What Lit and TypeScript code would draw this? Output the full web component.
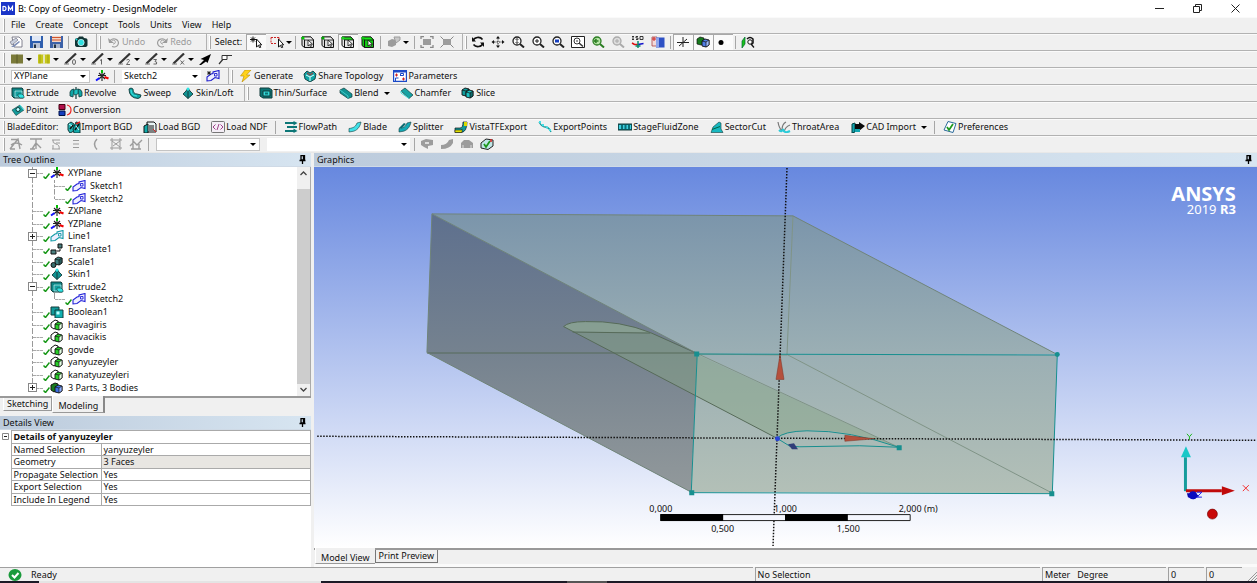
import { LitElement, html, svg, css, nothing, TemplateResult } from "lit";
import { customElement, property } from "lit/decorators.js";

const T = "#10a5a5";
const D = "#123c3c";

const cube = (face: string, side: string, x = 0, y = 0) => svg`
  <path d="M${x + 1} ${y + 3}l3-2 4 1v5l-3 2-4-1z" fill=${face} stroke="#111" stroke-width=".9"/>
  <path d="M${x + 5} ${y + 4}l3-2v5l-3 2z" fill=${side} stroke="#111" stroke-width=".7"/>
  <path d="M${x + 1} ${y + 3}l4 1" stroke="#111" stroke-width=".7"/>`;

const magnifier = (color: string, inner: TemplateResult | typeof nothing, lens = "#fff") => svg`
  <circle cx="6" cy="5" r="4" fill=${lens} stroke=${color} stroke-width="1.3"/>
  <path d="M9 8l4 3.500" stroke=${color} stroke-width="2"/>${inner}`;

const pickCube = (body: string, top: string, dot: string) => svg`
  <path d="M1 2V9.500L3.500 11.500H12.500V4L10 1H1z" fill=${body} stroke="#111"/>
  <path d="M1 1h9l2.500 3H3.500z" fill=${top} stroke="#111" stroke-width=".8"/>
  <path d="M3.500 4v7.500" stroke="#111"/>
  <circle cx="2" cy="2" r="1.600" fill=${dot}/>
  <path d="M7 4v6l1.500-1.300 1 2 1-.5-1-2h2z" fill="#fff" stroke="#111" stroke-width=".8"/>`;

const lineTool = (mark: TemplateResult) => svg`
  <path d="M1.500 10.500L12 .500" stroke="#333" stroke-width="2.200"/>
  <path d="M0 11h5" stroke="#777"/>
  <g fill="none" stroke="#555" stroke-width=".9">${mark}</g>`;

const sketch = (color: string) => svg`
  <path d="M1 11V7L5 4l2-.5V2l6-1.500v8L9 7.500 5 10.500z" fill="#eef" stroke=${color} stroke-width="1.100"/>
  <path d="M8.500 3.500h2.500v2.500H8.500z" fill="none" stroke=${color} stroke-width=".9"/>`;

const axes = svg`
  <path d="M7 1v10M3 5.500h8M4 9L10 3M4 3l6 6" stroke="#222" stroke-width="1.100"/>
  <path d="M9.500 7l4 1.500" stroke="#e00" stroke-width="2"/>
  <path d="M7 0v3" stroke="#0b0" stroke-width="2"/>
  <path d="M1 10.500L4.500 8" stroke="#11f" stroke-width="2"/>`;

const bladeShape = (fill: string) => svg`
  <path d="M1 11V7.500C6 7 8 5 9 2l4-1C12 6 9 10 4 10.500z" fill=${fill} stroke=${D} stroke-width=".6"/>`;

const G = "#9c9c9c";

const icons: Record<string, TemplateResult> = {
  newDoc: svg`<path d="M3 1h7l3 3v7H5z" fill="#fff" stroke="#667" stroke-width=".8"/><path d="M1 6l6-4 2 2-6 5z" fill="#c9cfdd" stroke="#667" stroke-width=".6"/><path d="M2 11l8-6 1 1-6 5z" fill="#7d8db5"/>`,
  save: svg`<path d="M1 0h13v12H1z" fill="#2f5fae"/><path d="M3 0h9v5H3z" fill="#dfe7f5"/><path d="M4 7h7v5H4z" fill="#b8c2d6"/><path d="M5 8.500h2V12H5z" fill="#234"/>`,
  saveAs: svg`<path d="M1 0h13v12H1z" fill="#3d62a8"/><path d="M3 0h9v6H3z" fill="#f3d6c6"/><path d="M3 1.500h9M3 4h9" stroke="#d2562e"/><path d="M4 8h7v4H4z" fill="#a8b4cc"/><path d="M5 8.500h2V12H5z" fill="#234"/>`,
  camera: svg`<path d="M1 4q0-2 3-2l1-1.500h4L10 2q3.500 0 3.500 2v5q0 2-3 2H4Q1 11 1 9z" fill="#133"/><circle cx="7" cy="6.500" r="3.200" fill="#2fe0e0" stroke="#fff" stroke-width=".6"/><circle cx="2.500" cy="3.500" r="1" fill="#2dd"/>`,
  undo: svg`<path d="M3 5a4.500 4 0 1 1 2 5.500" fill="none" stroke=${G} stroke-width="1.200"/><path d="M1 2l1 5h5z" fill=${G}/><path d="M5 4.500a2 2 0 1 1 1 3.500" fill="none" stroke=${G}/>`,
  redo: svg`<path d="M11 5a4.500 4 0 1 0-2 5.500" fill="none" stroke=${G} stroke-width="1.200"/><path d="M13 2l-1 5H7z" fill=${G}/><path d="M9 4.500a2 2 0 1 0-1 3.500" fill="none" stroke=${G}/>`,
  pointer: svg`<path d="M1 3.500h6M2 1.500l4 4M6 1.500l-4 4M4 .500v6" stroke="#111"/><path d="M7.500 3v8l2-1.700 1 2.500 1.200-.5-1-2.500h2z" fill="#fff" stroke="#111"/>`,
  boxSel: svg`<path d="M1 1.500h8M1 1.500v6h5M9 1.500v2" fill="none" stroke="#c22" stroke-dasharray="2 1"/><path d="M8.500 3v8l2-1.700 1 2.500 1.200-.5-1-2.500h2z" fill="#fff" stroke="#111"/>`,
  fPoint: pickCube("#ddd", "#eee", "#0c0"),
  fEdge: pickCube("#ddd", "#eee", "#0a0"),
  fFace: pickCube("#e8e8e8", "#1fd41f", "#1fd41f"),
  fBody: pickCube("#12c812", "#18e818", "#12c812"),
  extendSel: svg`<path d="M1 5l4-2 4 1v5l-4 2-4-1z" fill=${G}/><path d="M7 1h6v3L9 7z" fill="#c8c8c8" stroke=${G}/>`,
  grow: svg`<path d="M3 3h8v6H3z" fill=${G}/><path d="M1 3V.500h3M10 .500h3V3M13 9v2.500h-3M4 11.500H1V9" fill="none" stroke="#888" stroke-width="1.300"/>`,
  shrink: svg`<path d="M3 3h8v6H3z" fill=${G}/><path d="M.500 .500l3 3M13.500 .500l-3 3M.500 11.500l3-3M13.500 11.500l-3-3" stroke="#888"/>`,
  rotate: svg`<path d="M2 5C3 1 9 0 11.500 3.500" fill="none" stroke="#111" stroke-width="1.600"/><path d="M12 7C11 11 5 12 2.500 8.500" fill="none" stroke="#111" stroke-width="1.600"/><path d="M1 1v4.500h4zM13 11V6.500H9z" fill="#111"/>`,
  pan: svg`<path d="M7 2v8M3 6h8" stroke="#222" stroke-dasharray="1.500 1"/><path d="M7 0l2 2.500H5zM7 12L5 9.500h4zM.500 6L3 4v4zM13.500 6L11 4v4z" fill="#111"/>`,
  zoom: magnifier("#222", svg`<path d="M6 2.500v5M4.500 4L6 2.500 7.500 4M4.500 6L6 7.500 7.500 6" fill="none" stroke="#222" stroke-width=".8"/>`),
  zoomIn: magnifier("#222", svg`<path d="M6 3v4M4 5h4" stroke="#222"/>`),
  zoomBox: magnifier("#222", svg`<path d="M4 3.500h4v3H4z" fill="#1740c0"/>`),
  zoomFit: svg`<path d="M.500 .500h13v11H.500z" fill="#fff" stroke="#222"/><circle cx="6" cy="5" r="3" fill="none" stroke="#333"/><path d="M8 7l4 3.500" stroke="#333" stroke-width="1.500"/><path d="M5 5h2" stroke="#333"/>`,
  zoomPrev: magnifier("#2b7d22", svg`<path d="M3.500 5h4M5.500 3L3.500 5l2 2" fill="none" stroke="#2b7d22" stroke-width="1.300"/>`, "#b9e6a8"),
  zoomNext: magnifier("#aaa", svg`<path d="M4 5h4M6 3v4" stroke="#aaa"/>`, "#ddd"),
  iso: svg`<path d="M1 .500h2M2 .500v3M1 3.500h2M7 .500H5v1.500h2v1.500H5M9 .500h3v3H9z" fill="none" stroke="#222" stroke-width=".9"/><path d="M1 7l2.500 1.500H7" fill="none" stroke="#d11" stroke-width="1.500"/><path d="M7 8.500l5.500-1" stroke="#11c" stroke-width="1.500"/><path d="M7 5v7M4.500 10h5" stroke="#0a8a6a" stroke-width="1.500"/>`,
  lookAt: svg`<path d="M1 1h5v9H1z" fill="#f3dada" stroke="#a44" stroke-width=".8"/><path d="M5 1.500h8.500v10H5z" fill="#2d50c4"/><path d="M5 1.500h3v10H5z" fill="#8fa5ea"/><path d="M3 1v4M1 3h4" stroke="#c22"/>`,
  origin: svg`<path d="M7 1v10M1 6.500h12M3 10l8-7" stroke="#222"/>`,
  solids: svg`<path d="M1 3l3-2 4 1v5L5 9 1 8z" fill="#167a1d" stroke="#111" stroke-width=".7"/>${cube("#4f7fe6", "#9fbcff", 5, 2)}`,
  dot: svg`<circle cx="5" cy="6.500" r="2.500" fill="#000"/><circle cx="12" cy="6.500" r="2" fill="#fff"/>`,
  lookFace: svg`<path d="M1 5l3-4v7l-3 4z" fill="#19c219" stroke="#063" stroke-width=".7"/><path d="M6 3q3-3 6 0v4q-1 2-2 0" fill="none" stroke="#111" stroke-width="1.500"/><circle cx="9" cy="6" r="2.200" fill="#fff" stroke="#111"/><path d="M10 8l3 3.500" stroke="#111" stroke-width="1.200"/>`,
  olive: svg`<path d="M1 1.500h12v9H1z" fill="#7b7b3a"/><path d="M7 1.500v9" stroke="#5a5a28"/>`,
  yellow: svg`<path d="M1 1.500h12v9H1z" fill="#c6c61a"/><path d="M7 1.500v9" stroke="#eee" stroke-width="1.500"/><path d="M3 1.500v9M11 1.500v9" stroke="#a2a210"/>`,
  line0: lineTool(svg`<ellipse cx="10" cy="9" rx="1.500" ry="2.500"/>`),
  line1: lineTool(svg`<path d="M9 7.500l1.500-1v5"/>`),
  line2: lineTool(svg`<path d="M8.500 7q3-1.500 3 .5l-3 4h3.500"/>`),
  line3: lineTool(svg`<path d="M8.500 6.500h3L10 8.500q2.500 0 1.500 2.500H8.500"/>`),
  lineX: lineTool(svg`<path d="M8.500 7.500l3.500 4M12 7.500l-3.500 4"/>`),
  arrowBlack: svg`<path d="M1 12l5-5-3.500-1L13 1 9.500 10 8 8.500 3 12z" fill="#000"/>`,
  node: svg`<path d="M1 11l5-6M7 2.500h7" stroke="#333" stroke-width="1.200"/><path d="M4 2.500h5v4H4z" fill="#fff" stroke="#333"/>`,
  axes,
  newSketch: svg`${sketch("#1a1acc")}<path d="M1 3h4M3 1v4M1.500 1.500l3 3M4.500 1.500l-3 3" stroke="#111" stroke-width=".8"/>`,
  bolt: svg`<path d="M6 0L1.500 6H5L3 12l8-7H7.500L12 0z" fill="#ffd21a" stroke="#b98a00" stroke-width=".6"/>`,
  share: svg`<path d="M1 4l3-3 3 2 3-2 3 3-1 5-5 3-5-3z" fill=${T} stroke=${D} stroke-width=".9"/><path d="M3 5l4 2 4-2M7 7v4" stroke="#e6ffff" stroke-width="1" fill="none"/><path d="M4 3l3 2 3-2" stroke="#c22" fill="none"/>`,
  params: svg`<path d="M.500 .500h13v11H.500z" fill="#fff" stroke="#1a49c8" stroke-width="1.400"/><path d="M.500 1.500h13" stroke="#1a49c8" stroke-width="2"/><path d="M2 5h3M3.500 3.500v3M9 9h3M10.500 7.500v3" stroke="#c22"/><path d="M7.500 6V3.500h3v2h-3M2.500 11V8h3" fill="none" stroke="#1a49c8"/>`,
  extrude: svg`<path d="M1 1h10l1 1v9H3L1 9z" fill="#0d8686" stroke=${D}/><path d="M4 4h7v6H4z" fill="#14a0a0" stroke="#dff" stroke-width=".6"/><path d="M7 7h4l2 2v2H9L7 9z" fill="#2fe3e3" stroke=${D} stroke-width=".6"/>`,
  revolve: svg`<path d="M1 9V5q1-3 4-3v4q-1 1-1 4zM13 9V5q-1-3-4-3v4q1 1 1 4z" fill=${T} stroke=${D} stroke-width=".8"/><path d="M7 0v12" stroke=${D} stroke-width="1.200"/><path d="M5 3l4-1v5L5 8z" fill="#1fc3c3" stroke=${D} stroke-width=".6"/>`,
  sweep: svg`<path d="M1 2q2-2 4 0 0 5 4 5l4 1q0 3-3 3.500Q1 11 1 2z" fill=${T} stroke=${D} stroke-width=".9"/><path d="M3 3q0 6 6 6" stroke="#4ee" fill="none"/>`,
  skin: svg`<path d="M7 1l2 3 3 3-5 4.500L2 7l3-3z" fill="#129393" stroke=${D} stroke-width=".9"/><path d="M7 4v7.500" stroke=${D}/><circle cx="7" cy="2" r="1.500" fill="#2fe3e3"/>`,
  thin: svg`<path d="M1 1h9l3 2v8H4L1 9z" fill="#0b7474" stroke=${D}/><path d="M4 4h7v5H4z" fill="#35dada" stroke=${D}/><path d="M6 5.500h3v2H6z" fill="#0b7474"/>`,
  blend: svg`<path d="M1 3l4-2 8 6v3l-4 1.500L1 6z" fill="#119494" stroke=${D} stroke-width=".7"/><path d="M1 3l8 6v2.500" fill="none" stroke="#4cc"/>`,
  chamfer: svg`<path d="M1 4l4-3 8 7-4 3.500z" fill="#16a3a3" stroke=${D} stroke-width=".7"/><path d="M1 4v2l8 5.500" fill="none" stroke="#4dd"/>`,
  slice: svg`${cube("#119b9b", "#0b6b6b", 0, 0)}${cube("#1bc4c4", "#0b6b6b", 4, 2)}`,
  point: svg`<path d="M1 6l8-5 4 5-8 5.500z" fill="#149c9c" stroke=${D} stroke-width=".6"/><circle cx="7" cy="5.500" r="2" fill="#bff" stroke=${D}/><path d="M9 1l4 5" stroke="#6ee"/>`,
  convert: svg`<path d="M1 .500h6v5H1z" fill="#b0104a" stroke="#401"/><path d="M1 7h6v4.500H1z" fill="#173fc0" stroke="#014"/><path d="M9 1q4 1 4 5t-4 5" fill="none" stroke="#e22" stroke-width="1.200"/>`,
  importBgd: svg`<path d="M1 3l3-2 3 2v7l-4 2-2-3z" fill="#22b5b5" stroke=${D}/><path d="M9 1l4 1v10H7L6 8z" fill="#1aa" stroke=${D}/><path d="M3 8l3-4M8 9l4-6" stroke="#111" stroke-width="1.500"/><path d="M2 3l3 2M9 5l3 4" stroke="#cff"/><path d="M9 3l4-2" stroke="#d22" stroke-width="1.500"/>`,
  loadBgd: svg`<path d="M4 1h7l2 2v8H4z" fill="#e8f4f4" stroke="#111"/><path d="M1 5l4-2v9H1z" fill="#1aa" stroke="#111"/><path d="M6 5h5M6 7h5M6 9h5" stroke="#111"/><path d="M10 8l3 3" stroke="#d22"/>`,
  loadNdf: svg`<rect x=".500" y=".500" width="13" height="11" rx="1" fill="#f4eef6" stroke="#777"/><path d="M4.500 3.500L2 6l2.500 2.500M9.500 3.500L12 6 9.500 8.500M8 3L6 9" fill="none" stroke="#a0428a"/>`,
  flow: svg`<path d="M1 2h10M3 6h10M1 10h10" stroke="#0d7777" stroke-width="2.200"/><path d="M9.500 0l4 2-4 2.500zM9.500 7.500l4 2.500-4 2z" fill="#0d7777"/>`,
  blade: bladeShape("#3fe0e8"),
  splitter: svg`${bladeShape("#13a9b5")}<path d="M1 7l5-5 2 1-4 4z" fill="#0b6a72"/>`,
  vista: svg`<path d="M1 7h5q3 0 3-6h4q0 10-6 10.500H1z" fill="#0d9a9a" stroke="#111" stroke-width=".7"/><path d="M1 9h6l1-1v3.500H1z" fill="#e0e000" stroke="#222" stroke-width=".6"/><path d="M10 1h3v4h-3z" fill="#dada00"/>`,
  exportPts: svg`<path d="M1 1q3 5 6 5 4 0 6 5" fill="none" stroke="#159a9a" stroke-width="1.300"/><path d="M1 1h2M4 4h2M8 6.500h2M11 9h2" stroke="#3fe0e8" stroke-width="2"/>`,
  stage: svg`<path d="M0 3h14v6H0z" fill="#0b6f78" stroke=${D}/><path d="M1 4h2v4H1zM5 4h1.500v4H5zM8.500 4H10v4H8.500zM12 4h1v4h-1z" fill="#3fd0e0"/>`,
  sector: svg`<path d="M1 11.500L3 6l6-5 2 1v6l2 3.500z" fill="#17b8c0" stroke=${D} stroke-width=".6"/><path d="M2 8.500l8-3" stroke="#064"/>`,
  throat: svg`<path d="M1 1q1 6 4 9M5 9q0-6 4-8M7 11q1-5 6-7" fill="none" stroke="#777" stroke-width="1.200"/><path d="M2 9q3 3 4-1 1 5 7 2" fill="none" stroke="#2ccbd8" stroke-width="2"/>`,
  cad: svg`<path d="M1 3l3-1v9l-3 1z" fill="#12a5b0" stroke="#044"/><path d="M4 3h4V1l6 4-6 5V8H4z" fill="#0b0b0b"/><path d="M4 8h5v3H4z" fill="#12a5b0"/>`,
  prefs: svg`<path d="M5 .500l8 2L10 11.500 1 9z" fill="#fff" stroke="#2a6a9a"/><path d="M4 6l2 3 4-6" fill="none" stroke="#1c9a1c" stroke-width="1.800"/>`,
  g1: svg`<path d="M1 11L9 1l2 10M2 7q5-4 11 0M2 1.500h6M1 11h5" fill="none" stroke=${G} stroke-width="1.400"/>`,
  g2: svg`<path d="M1 1h12M7 1v10M7 5l-4 6M7 5l5 5M1 11h5" fill="none" stroke=${G} stroke-width="1.400"/>`,
  g3: svg`<path d="M3 2h8M4 2q-1 3 3 4t3 5M11 5H7M3 11h8M4 7v4" fill="none" stroke=${G}/>`,
  g4: svg`<path d="M4 2.500h6M4 6h6M4 9.500h6" stroke=${G} stroke-width="1.200"/>`,
  g5: svg`<path d="M8 1Q3 6 8 11.500" fill="none" stroke=${G} stroke-width="1.500"/>`,
  g6: svg`<path d="M1 2h12M1 10h12M3 0v12M11 0v12M3 3l8 6M4 8l7-5" stroke=${G} fill="none"/>`,
  g7: svg`<path d="M1 8l4-4 3 3 5-5M2 11h10M4 1v10M10 6v5" stroke=${G} stroke-width="1.400" fill="none"/>`,
  b1: svg`<path d="M1 3l5-2 7 1v5l-5 1v3l-4-2-3-2z" fill=${G}/><path d="M5 4h4v2H5z" fill="#ddd"/>`,
  b2: svg`<path d="M1 11V7q6 0 8-5l4-1v4Q10 11 1 11z" fill=${G}/>`,
  b3: svg`<path d="M1 5l3-3h5l4 3v5H1z" fill=${G}/><path d="M3 10v-3M11 10v-3" stroke="#ddd"/>`,
  b4: svg`<path d="M1 5l5-4 7 1v6l-5 3.500L1 10z" fill="#bfe6e8" stroke="#222"/><path d="M4 6l2 3 4-6" fill="none" stroke="#1b961b" stroke-width="1.800"/><path d="M11 1v3" stroke="#d22" stroke-width="1.500"/>`,
  sketchBlue: sketch("#2222d8"),
  sketchTeal: sketch("#0f9aa5"),
  translate: svg`<path d="M1 7h5v4H1zM8 1h4v4H8z" fill="#4a8080" stroke="#111"/><path d="M7 8h3V6" fill="none" stroke="#111"/>`,
  scale: svg`${cube("#3f8080", "#2a5c5c", 4, 0)}<circle cx="3.500" cy="9" r="2.500" fill="#356b6b" stroke="#111"/>`,
  boolean: svg`<path d="M1 1h8v8H1z" fill="#119a9a" stroke=${D}/><path d="M5 4h8v8H5z" fill="#0fb0b0" stroke=${D}/><path d="M6.500 5.500h3v3h-3z" fill="#bff"/>`,
  named: svg`<path d="M1 4l4-3 3 1v6l-4 2-3-2z" fill="#fff" stroke="#111"/>${cube("#28cf28", "#e6ffe6", 4, 2)}`,
  bodies: svg`<path d="M1 3l4-2 3 1v6l-4 2-3-2z" fill="#167a1d" stroke="#111"/>${cube("#3d6fe0", "#8fb0ff", 4, 2)}`,
};

const icon = (name: string) => html`<svg class="ic" viewBox="0 0 14 12" aria-hidden="true">${icons[name]}</svg>`;
const down = html`<svg class="down" viewBox="0 0 6 3" aria-hidden="true"><path d="M0 0h6L3 3z" /></svg>`;
const pin = html`<svg class="pin" viewBox="0 0 7 9" aria-hidden="true"><path d="M2 .500h3.500V5H2zM4.500 .500V5M.500 5.500h6M3.500 6v3" fill="none" stroke="#000" stroke-width="1.300"/></svg>`;

const shared = css`
  * { box-sizing: border-box; }
  button, select, input { font: inherit; color: inherit; border: 0; margin: 0; padding: 0; background: none; white-space: nowrap; }
  .ic { width: 14px; height: 12px; flex: none; display: block; }
  .pin { width: 7px; height: 9px; margin-right: 5px; }
  .head {
    height: 14px; display: flex; align-items: center; justify-content: space-between;
    padding-left: 3px; background: linear-gradient(90deg, #bccbdc, #d7e5f1); border-bottom: 1px solid #cfdae6;
  }
`;

type Item = [kind: string, icon?: string, label?: string];

const BARS: Item[][] = [
  [["t", "", "File"], ["t", "", "Create"], ["t", "", "Concept"], ["t", "", "Tools"], ["t", "", "Units"], ["t", "", "View"], ["t", "", "Help"]],
  [
    ["i", "newDoc", "New"], ["i", "save", "Save"], ["i", "saveAs", "Save as"], ["sep"], ["i", "camera", "Capture"], ["brk"],
    ["off", "undo", "Undo"], ["off", "redo", "Redo"], ["gap"], ["gap"], ["brk"], ["gap"], ["l", "", "Select:"], ["gap"], ["on", "pointer", "New selection"],
    ["d", "boxSel", "Selection mode"], ["sep"], ["i", "fPoint", "Points"], ["i", "fEdge", "Edges"], ["on", "fFace", "Faces"], ["i", "fBody", "Bodies"],
    ["sep"], ["d", "extendSel", "Extend"], ["gap"], ["sep"], ["i", "grow", "Expand"], ["i", "shrink", "Shrink"], ["brk"],
    ["i", "rotate", "Rotate"], ["i", "pan", "Pan"], ["i", "zoom", "Zoom"], ["i", "zoomIn", "Zoom in"], ["i", "zoomBox", "Box zoom"],
    ["i", "zoomFit", "Fit"], ["i", "zoomPrev", "Previous view"], ["i", "zoomNext", "Next view"], ["i", "iso", "Isometric"], ["i", "lookAt", "Look at"],
    ["sep"], ["on", "origin", "Plane"], ["on", "solids", "Model"], ["on", "dot", "Points"], ["sep"], ["i", "lookFace", "Look at face"],
  ],
  [
    ["d", "olive", "Face colour"], ["d", "yellow", "Edge colour"], ["d", "line0", "Free edges"], ["d", "line1", "Single edges"],
    ["d", "line2", "Double edges"], ["d", "line3", "Triple edges"], ["d", "lineX", "Multiple edges"], ["i", "arrowBlack", "Direction"], ["i", "node", "Vertices"],
  ],
  [
    ["plane", "", "XYPlane"], ["i", "axes", "New plane"], ["sep"], ["sketch", "", "Sketch2"], ["i", "newSketch", "New sketch"], ["brk"],
    ["t", "bolt", "Generate"], ["t", "share", "Share Topology"], ["t", "params", "Parameters"],
  ],
  [
    ["t", "extrude", "Extrude"], ["t", "revolve", "Revolve"], ["gap"], ["t", "sweep", "Sweep"], ["t", "skin", "Skin/Loft"], ["brk"],
    ["gap"], ["gap"], ["t", "thin", "Thin/Surface"], ["gap"], ["td", "blend", "Blend"], ["t", "chamfer", "Chamfer"], ["t", "slice", "Slice"],
  ],
  [["t", "point", "Point"], ["t", "convert", "Conversion"]],
  [
    ["l", "", "BladeEditor:"], ["tw", "importBgd", "Import BGD"], ["tw", "loadBgd", "Load BGD"], ["tw", "loadNdf", "Load NDF"], ["sep"],
    ["tw", "flow", "FlowPath"], ["tw", "blade", "Blade"], ["tw", "splitter", "Splitter"], ["tw", "vista", "VistaTFExport"], ["tw", "exportPts", "ExportPoints"],
    ["tw", "stage", "StageFluidZone"], ["tw", "sector", "SectorCut"], ["tw", "throat", "ThroatArea"], ["gap"], ["td", "cad", "CAD Import"], ["sep"], ["tw", "prefs", "Preferences"],
  ],
  [
    ["i", "g1", "Blade tool 1"], ["i", "g2", "Blade tool 2"], ["i", "g3", "Blade tool 3"], ["i", "g4", "Blade tool 4"], ["i", "g5", "Blade tool 5"],
    ["i", "g6", "Blade tool 6"], ["i", "g7", "Blade tool 7"], ["sep"], ["mid", "", ""], ["wide", "", ""], ["sep"],
    ["i", "b1", "Body tool 1"], ["i", "b2", "Body tool 2"], ["i", "b3", "Body tool 3"], ["i", "b4", "Body tool 4"],
  ],
];

@customElement("dm-toolbars")
class DmToolbars extends LitElement {
  static styles = [shared, css`
    :host { display: block; background: #f0f0f0; }
    .bar { height: 17px; display: flex; align-items: center; border-bottom: 1px solid #b2b2b2; box-shadow: inset 0 1px #fafafa; overflow: hidden; }
    .bar:last-child { border-bottom-color: #e8e8e8; }
    .handle { width: 2px; height: 13px; margin: 0 1px 0 3px; border-right: 1px solid #a6a6a6; border-left: 1px solid #fff; flex: none; }
    .brk { display: flex; flex: none; margin-left: 5px; }
    .brk::before { content: ""; width: 1px; height: 17px; background: #b2b2b2; }
    .brk .handle { height: 13px; margin: 2px 1px 0 2px; }
    .sep { width: 1px; height: 13px; margin: 0 2px; background: #a6a6a6; flex: none; }
    .gap { width: 2px; flex: none; }
    .t { display: flex; align-items: center; gap: 1px; padding: 0 5px; height: 16px; flex: none; }
    .tw { padding-left: 6px; }
    .t .down { margin-left: 4px; }
    .off { color: #9a9a9a; }
    .l { padding: 0 2px 0 1px; flex: none; }
    .i { width: 20px; height: 16px; display: grid; place-items: center; flex: none; }
    .on { background: #fafafa; box-shadow: inset 1px 1px #a8a8a8; }
    .d { width: 27px; height: 16px; display: flex; align-items: center; gap: 2px; padding-left: 4px; flex: none; }
    .down { width: 6px; height: 3px; flex: none; display: block; }
    .combo { position: relative; display: flex; align-items: center; flex: none; height: 13px; background: #fff; margin: 0 2px 0 5px; }
    .combo select { appearance: none; width: 100%; height: 13px; padding-left: 2px; }
    .combo .down { position: absolute; right: 3px; top: 5px; pointer-events: none; }
    .plane { width: 79px; border: 1px solid #c4c4c4; }
    .plane .down, .mid .down { top: 4px; }
    .sketch { width: 79px; }
    .mid { width: 104px; border: 1px solid #c4c4c4; }
    .wide { width: 143px; }
  `];

  private item([kind, name = "", label = ""]: Item) {
    switch (kind) {
      case "sep": return html`<span class="sep"></span>`;
      case "gap": return html`<span class="gap"></span>`;
      case "brk": return html`<span class="brk"><span class="handle"></span></span>`;
      case "l": return html`<span class="l">${label}</span>`;
      case "i": return html`<button class="i" aria-label=${label}>${icon(name)}</button>`;
      case "on": return html`<button class="i on" aria-pressed="true" aria-label=${label}>${icon(name)}</button>`;
      case "d": return html`<button class="d" aria-label=${label}>${icon(name)}${down}</button>`;
      case "off": return html`<button class="t off" disabled>${icon(name)}${label}</button>`;
      case "td": return html`<button class="t">${icon(name)}${label}${down}</button>`;
      case "tw": return html`<button class="t tw">${icon(name)}${label}</button>`;
      case "t": return html`<button class="t">${name ? icon(name) : nothing}${label}</button>`;
      default: return html`<label class="combo ${kind}"><select aria-label=${kind}><option>${label}</option></select>${down}</label>`;
    }
  }

  render() {
    return BARS.map((bar) => html`<div class="bar" role="toolbar"><span class="handle"></span>${bar.map((i) => this.item(i))}</div>`);
  }
}

type Node = [level: number, icon: string, label: string, box?: string];

const TREE: Node[] = [
  [0, "axes", "XYPlane", "-"], [1, "sketchBlue", "Sketch1"], [1, "sketchBlue", "Sketch2", "end"],
  [0, "axes", "ZXPlane"], [0, "axes", "YZPlane"], [0, "sketchTeal", "Line1", "+"], [0, "translate", "Translate1"],
  [0, "scale", "Scale1"], [0, "skin", "Skin1"], [0, "extrude", "Extrude2", "-"], [1, "sketchBlue", "Sketch2", "end"],
  [0, "boolean", "Boolean1"], [0, "named", "havagiris"], [0, "named", "havacikis"], [0, "named", "govde"],
  [0, "named", "yanyuzeyler"], [0, "named", "kanatyuzeyleri"], [0, "bodies", "3 Parts, 3 Bodies", "+"],
];

@customElement("dm-tree")
class DmTree extends LitElement {
  static styles = [shared, css`
    :host { flex: 1; min-height: 0; display: flex; flex-direction: column; }
    .body { flex: 1; min-height: 0; display: flex; background: #fff; border-right: 1px solid #aaa; }
    ul { list-style: none; margin: 0; padding: 0 0 2px; flex: 1; display: grid; grid-auto-rows: 1fr; }
    li { display: flex; align-items: center; padding-left: 27px; min-height: 0; }
    .cell { position: relative; width: 16px; align-self: stretch; flex: none; display: flex; align-items: center; }
    .cell::before { content: ""; position: absolute; left: 5px; top: 0; bottom: 0; border-left: 1px dashed #999; }
    .cell::after { content: ""; position: absolute; left: 6px; right: 0; top: 50%; border-top: 1px dashed #aaa; }
    .half::before { bottom: 50%; }
    .plain::after { display: none; }
    .gap { width: 6px; flex: none; }
    .box { position: relative; z-index: 1; width: 9px; height: 9px; margin-left: 1px; background: #fff; border: 1px solid #888; display: block; }
    .box path { stroke: #222; }
    .check { width: 7px; height: 6px; margin-top: 5px; flex: none; }
    .label { padding-left: 4px; line-height: 12px; }
    .bar { width: 13px; background: #f0f0f0; display: flex; flex-direction: column; align-items: center; padding: 4px 0; gap: 3px; }
    .bar svg { width: 7px; height: 5px; }
    .thumb { flex: 1; align-self: stretch; background: #cdcdcd; margin-top: 10px; }
  `];

  private row([level, name, label, box = ""]: Node, i: number) {
    const last = i === TREE.length - 1;
    return html`<li role="treeitem">
      ${level
        ? html`<span class="cell plain"></span><span class="gap"></span><span class="cell ${box === "end" ? "half" : ""}"></span>`
        : html`<span class="cell ${last ? "half" : ""}">${box
            ? html`<svg class="box" viewBox="0 0 7 7"><path d=${box === "+" ? "M1 3.500h5M3.500 1v5" : "M1 3.500h5"} /></svg>`
            : nothing}</span>`}
      <svg class="check" viewBox="0 0 7 6"><path d="M.500 3.500L2.500 5.500 6.500 .500" fill="none" stroke="#149614" stroke-width="1.500" /></svg>
      ${icon(name)}<span class="label">${label}</span>
    </li>`;
  }

  render() {
    return html`
      <div class="head">Tree Outline ${pin}</div>
      <div class="body">
        <ul role="tree">${TREE.map((n, i) => this.row(n, i))}</ul>
        <div class="bar">
          <svg viewBox="0 0 7 5"><path d="M.500 4l3-3 3 3" fill="none" stroke="#444" stroke-width="1.300" /></svg>
          <div class="thumb"></div>
          <svg viewBox="0 0 7 5"><path d="M.500 1l3 3 3-3" fill="none" stroke="#444" stroke-width="1.300" /></svg>
        </div>
      </div>`;
  }
}

const DETAILS: [string, string][] = [
  ["Named Selection", "yanyuzeyler"], ["Geometry", "3 Faces"], ["Propagate Selection", "Yes"], ["Export Selection", "Yes"], ["Include In Legend", "Yes"],
];

@customElement("dm-details")
class DmDetails extends LitElement {
  static styles = [shared, css`
    :host { display: flex; flex-direction: column; height: 151px; background: #fff; }
    table { width: 100%; height: 76px; border-collapse: collapse; table-layout: fixed; line-height: 11px; }
    th, td { padding: 0 2px; text-align: left; font-weight: 400; border: 1px solid #aaa; white-space: nowrap; }
    .gut { width: 11px; border: 0; padding: 0; }
    .gut svg { width: 7px; height: 7px; display: block; margin-left: 2px; }
    .name { width: 90px; }
    .title { font-weight: 700; }
    .ro { background: #e8e6e2; }
  `];

  render() {
    return html`
      <div class="head">Details View ${pin}</div>
      <table>
        <colgroup><col class="gut" /><col class="name" /><col /></colgroup>
        <tr>
          <td class="gut"><svg viewBox="0 0 7 7"><path d="M.500 .500h6v6h-6z" fill="#fff" stroke="#888" /><path d="M2 3.500h3" stroke="#222" /></svg></td>
          <th class="title" colspan="2">Details of yanyuzeyler</th>
        </tr>
        ${DETAILS.map(([k, v]) => html`<tr><td class="gut"></td><th>${k}</th><td class=${k === "Geometry" ? "ro" : ""}>${v}</td></tr>`)}
      </table>`;
  }
}

@customElement("dm-scene")
class DmScene extends LitElement {
  static styles = css`
    :host { display: block; flex: 1; min-height: 0; overflow: hidden; background: linear-gradient(#6788df, #fff); }
    svg { width: 100%; height: 100%; display: block; }
    text { font-family: "Noto Sans", sans-serif; font-size: 9px; fill: #111; }
    .brand { font-size: 20px; font-weight: 700; fill: #fff; text-anchor: end; }
    .release { font-size: 13px; fill: #fff; text-anchor: end; }
    .strong { font-weight: 700; }
    .edge { fill: none; stroke: #6f8478; stroke-width: 1; }
    .dark { fill: none; stroke: #566a58; stroke-width: 1; }
    .hidden { fill: none; stroke: #7f9487; stroke-width: 1; }
    .teal { fill: none; stroke: #178f8f; stroke-width: 1; }
    .dots { fill: none; stroke: #111; stroke-width: 1.5; stroke-dasharray: 1.5 1.5; }
    .knot { fill: #178f8f; }
  `;

  render() {
    return html`<svg viewBox="314 167 943 382" preserveAspectRatio="xMidYMid meet" role="img" aria-label="Model view">
      <defs>
        <linearGradient id="top" x1="0" y1="0" x2="0" y2="1"><stop offset="0" stop-color="#7b95ab" /><stop offset="1" stop-color="#9bafb4" /></linearGradient>
        <linearGradient id="side" x1="0" y1="0" x2="0" y2="1"><stop offset="0" stop-color="#5e708e" /><stop offset=".5" stop-color="#75828f" /><stop offset="1" stop-color="#92999b" /></linearGradient>
        <linearGradient id="front" x1="0" y1="0" x2="0" y2="1"><stop offset="0" stop-color="#9bafb4" /><stop offset="1" stop-color="#b3c0b7" /></linearGradient>
      </defs>
      <path d="M431 214L793 216 1058 355 697 354z" fill="url(#top)" />
      <path d="M431 214L697 354 691 493 426 353z" fill="url(#side)" />
      <path d="M697 354L1058 355 1053 494 691 493z" fill="url(#front)" />
      <path d="M563 327Q568 322 585 322Q620 321 650 333L697 355 899 448Q865 436 833 432 790 428 777 439z" fill="#86a582" fill-opacity=".45" />
      <path d="M563 327Q568 322 585 322Q620 321 650 333L572 332z" fill="#94ad9c" fill-opacity=".5" />
      <path class="dark" d="M426 353.500H697M563 327Q568 322 585 322Q620 321 650 333L697 354M563 327L777 439M572 332.500L650 333.500" />
      <path class="hidden" d="M697 354.500L787 355.500M793 216L787 355 1053 494M697 354L899 448" />
      <path class="edge" d="M697 354L431 214 793 216 1058 355M431 214L426 353 691 493" />
      <path class="teal" d="M697 354.500L1058 355.500 1053 494.500 691 493.500z" />
      <path class="dots" d="M787 168L773 547M316 437L1257 441" />
      <path class="teal" d="M777 439Q783 432 807 431.500 850 431 899 448L860 446.500 800 447.500 790 447z" />
      <path class="knot" d="M694 352h5v5h-5zM689 491h5v5h-5zM1050 492h5v5h-5zM897 446h5v5h-5z" />
      <circle class="knot" cx="1058" cy="355" r="2.500" />
      <path d="M780 355L784 380H776z" fill="#b5503c" stroke="#7c3022" stroke-width=".5" />
      <path d="M875 439.500L845 436V442z" fill="#b5503c" stroke="#7c3022" stroke-width=".5" />
      <path d="M788 445l6-1 4 6-6 0z" fill="#303c78" />
      <circle cx="777.500" cy="439.500" r="2.500" fill="#2a45d8" />

      <path d="M660.500 515.500h250v6h-250z" fill="#f4f6fd" stroke="#222" />
      <path d="M660 515h63v7h-63zM785 515h63v7h-63z" />
      <text x="649" y="513">0,000</text><text x="774" y="513">1,000</text><text x="899" y="513">2,000 (m)</text>
      <text x="711" y="533">0,500</text><text x="837" y="533">1,500</text>

      <text class="brand" x="1237" y="201">ANSYS</text>
      <text class="release" x="1237" y="214">2019 <tspan class="strong">R3</tspan></text>

      <path d="M1185 492V458h3v34z" fill="#159c9c" /><path d="M1187 447l5 11h-10z" fill="#18c8c8" />
      <path d="M1187 490h36v3h-36z" fill="#c00a0a" /><path d="M1236 491.500l-13 4.500v-9z" fill="#c00a0a" />
      <path d="M1188 494h9l3 3-5 3-6-2z" fill="#0808a8" /><circle cx="1194" cy="496" r="4" fill="#0a0ac0" />
      <circle cx="1213.500" cy="515" r="5" fill="#c80808" stroke="#6c0000" stroke-width=".6" />
      <path d="M1188 434.500l2.500 3 2.500-3M1190.500 437.500v3" fill="none" stroke="#1eb81e" />
      <path d="M1244 486l6 6M1250 486l-6 6" stroke="#f23030" />
      <path d="M1198 493h5l-5 5h5" fill="none" stroke="#2020e8" />
    </svg>`;
  }
}

@customElement("app-root")
class AppRoot extends LitElement {
  @property() title = "B: Copy of Geometry - DesignModeler";

  static styles = [shared, css`
    :host {
      display: flex; flex-direction: column; height: 100vh; overflow: hidden; background: #f0f0f0;
      font: 9px/12px "Noto Sans", "Open Sans", sans-serif; color: #111;
    }
    .titlebar { height: 17px; background: #fff; display: flex; align-items: center; gap: 3px; padding-left: 1px; flex: none; color: #000; }
    .logo { width: 14px; height: 13px; flex: none; }
    .caption { flex: 1; }
    .win { width: 38px; height: 16px; display: grid; place-items: center; }
    .win svg { width: 9px; height: 9px; }
    .controls { display: flex; padding-right: 3px; }
    .main { flex: 1; min-height: 0; display: flex; gap: 3px; }
    .left { width: 311px; flex: none; display: flex; flex-direction: column; }
    .right { flex: 1; min-width: 0; display: flex; flex-direction: column; }
    .tabs { display: flex; align-items: flex-start; height: 20px; border-top: 2px solid #999; flex: none; }
    .tab { height: 13px; padding: 0 3px; border: 1px solid #999; border-top: 0; border-left-color: #fff; line-height: 12px; }
    .active { height: 17px; margin-top: -2px; padding: 4px 5px 0; border-right: 2px solid #888; background: #f0f0f0; }
    .lefttabs { padding-left: 3px; }
    .view { height: 16px; padding-left: 1px; }
    .view .active { height: 16px; padding: 4px 5px 0; border-right: 0; }
    .view .tab:last-child { border: 1px solid #777; border-top: 0; }
    .foot { height: 3px; background: #fafafa; flex: none; }
    .status { height: 14px; display: flex; flex: none; line-height: 13px; }
    .pane { border-top: 1px solid #a0a0a0; border-left: 1px solid #a0a0a0; margin-right: 2px; padding-left: 2px; white-space: pre; }
    .ready { flex: 754; border-left: 0; display: flex; align-items: center; gap: 9px; padding-left: 8px; }
    .ready svg { width: 14px; height: 12px; }
    .selection { flex: 286; }
    .units { width: 124px; }
    .num { width: 36px; }
    .grip { width: 10px; height: 11px; align-self: flex-end; margin-left: 3px; }
    .strip { height: 2px; display: flex; flex: none; background: #1c1a26; }
    .strip span { height: 2px; }
    .s1 { width: 39px; } .s2 { width: 282px; background: #e4e4e4; } .s3 { width: 246px; } .s4 { width: 40px; background: #555; }
  `];

  render() {
    return html`
      <header class="titlebar">
        <svg class="logo" viewBox="0 0 14 13"><path d="M0 0h14v13H0z" fill="#1a35c8" /><path d="M2 4v5M2 4.500q3-.5 3 2t-3 2M7.500 9V4.500l2 3 2-3V9" fill="none" stroke="#fff" stroke-width="1.200" /></svg>
        <span class="caption">${this.title}</span>
        <div class="controls">
          <button class="win" aria-label="Minimize"><svg viewBox="0 0 9 9"><path d="M0 4.500h9" stroke="#222" /></svg></button>
          <button class="win" aria-label="Restore"><svg viewBox="0 0 9 9"><path d="M.500 2.500h6v6h-6zM2.500 2V.500h6v6H7" fill="none" stroke="#222" /></svg></button>
          <button class="win" aria-label="Close"><svg viewBox="0 0 9 9"><path d="M.500 .500l8 8M8.500 .500l-8 8" stroke="#222" /></svg></button>
        </div>
      </header>
      <dm-toolbars></dm-toolbars>
      <div class="main">
        <aside class="left">
          <dm-tree></dm-tree>
          <div class="tabs lefttabs"><button class="tab">Sketching</button><button class="tab active">Modeling</button></div>
          <dm-details></dm-details>
        </aside>
        <main class="right">
          <div class="head">Graphics ${pin}</div>
          <dm-scene></dm-scene>
          <div class="tabs view"><button class="tab active">Model View</button><button class="tab">Print Preview</button></div>
          <div class="foot"></div>
        </main>
      </div>
      <footer class="status">
        <div class="pane ready"><svg viewBox="0 0 14 12"><ellipse cx="7" cy="6" rx="6.500" ry="6" fill="#1a9a3c" /><path d="M4 6l2.500 2.500L10.500 4" fill="none" stroke="#fff" stroke-width="2" /></svg><span>Ready</span></div>
        <div class="pane selection">No Selection</div>
        <div class="pane units">Meter   Degree</div>
        <div class="pane num">0</div>
        <div class="pane num">0</div>
        <svg class="grip" viewBox="0 0 10 11"><path d="M1 11L10 2M4 11l6-6M7 11l3-3" stroke="#999" /></svg>
      </footer>
      <div class="strip"><span class="s1"></span><span class="s2"></span><span class="s3"></span><span class="s4"></span></div>`;
  }
}
